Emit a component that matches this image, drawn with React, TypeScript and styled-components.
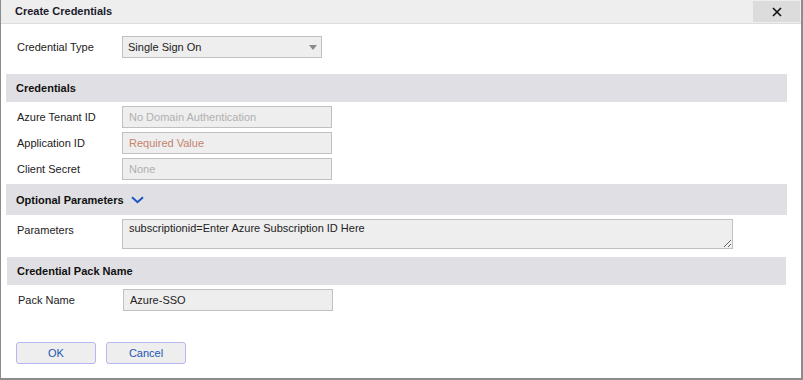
import React from "react";
import styled, { createGlobalStyle } from "styled-components";

const GlobalStyle = createGlobalStyle`
  html, body {
    margin: 0;
    padding: 0;
    background: #ffffff;
  }
  body {
    font-family: "Liberation Sans", Arial, sans-serif;
    font-size: 11px;
    color: #222222;
  }
`;

const Dialog = styled.div`
  width: 803px;
  height: 380px;
  box-sizing: border-box;
  border-left: 1px solid #8c8c8c;
  border-right: 2px solid #8c8c8c;
  border-bottom: 2px solid #8c8c8c;
  display: flex;
  flex-direction: column;
  background: #ffffff;
`;

const TitleBar = styled.div`
  height: 23px;
  border-bottom: 1px solid #dddddd;
  background: #eeeeee;
  display: flex;
  align-items: flex-start;
  justify-content: space-between;
  padding-left: 14px;
`;

const Title = styled.h1`
  margin: 0;
  font-size: 11px;
  font-weight: bold;
  line-height: 23px;
  color: #1b1b2b;
`;

const CloseButton = styled.button`
  width: 47px;
  height: 21px;
  margin: 1px 1px 0 0;
  border: none;
  padding: 0;
  background: #dcdcdc;
  display: flex;
  align-items: center;
  justify-content: center;
  cursor: pointer;
`;

const Body = styled.div`
  padding: 12px 14px 0 5px;
  display: flex;
  flex-direction: column;
`;

const Row = styled.div<{ $top?: number; $shift?: number }>`
  display: grid;
  grid-template-columns: 116px auto;
  align-items: start;
  margin-top: ${(p) => p.$top ?? 4}px;
  padding-left: ${(p) => p.$shift ?? 0}px;
`;

const Label = styled.label<{ $padTop?: number }>`
  padding-left: 11px;
  line-height: 22px;
  padding-top: ${(p) => p.$padTop ?? 0}px;
  color: #222222;
`;

const SectionHeader = styled.div<{ $top: number; $height: number; $shift?: number }>`
  margin-top: ${(p) => p.$top}px;
  margin-left: ${(p) => p.$shift ?? 0}px;
  margin-right: ${(p) => p.$shift ?? 0}px;
  height: ${(p) => p.$height}px;
  background: #e0e0e4;
  padding-left: 10px;
  display: flex;
  align-items: center;
  gap: 7px;
  font-weight: bold;
  color: #111111;
`;

const Field = styled.input<{ $tone?: "muted" | "warn" | "normal" }>`
  box-sizing: border-box;
  width: 210px;
  height: 22px;
  margin: 0;
  padding: 0 6px;
  border: 1px solid #c0c0c0;
  background: #eeeeee;
  font-family: "Liberation Sans", Arial, sans-serif;
  font-size: 11px;
  color: ${(p) =>
    p.$tone === "warn" ? "#c4826f" : p.$tone === "muted" ? "#b0b0b0" : "#222222"};
  outline: none;
`;

const SelectWrap = styled.div`
  position: relative;
  width: 200px;
  height: 22px;
  &::after {
    content: "";
    position: absolute;
    right: 5px;
    top: 9px;
    border-left: 4.5px solid transparent;
    border-right: 4.5px solid transparent;
    border-top: 5px solid #8a8a8a;
    pointer-events: none;
  }
`;

const Select = styled.select`
  appearance: none;
  box-sizing: border-box;
  width: 100%;
  height: 22px;
  margin: 0;
  padding: 0 5px;
  border: 1px solid #c0c0c0;
  border-radius: 0;
  background: #eeeeee;
  font-family: "Liberation Sans", Arial, sans-serif;
  font-size: 11px;
  color: #222222;
  outline: none;
`;

const TextArea = styled.textarea`
  box-sizing: border-box;
  width: 611px;
  height: 30px;
  margin: 0;
  padding: 2px 6px;
  border: 1px solid #c0c0c0;
  background: #eeeeee;
  font-family: "Liberation Sans", Arial, sans-serif;
  font-size: 11px;
  line-height: 13px;
  color: #222222;
  outline: none;
  display: block;
`;

const Actions = styled.div`
  margin-top: 31px;
  padding-left: 10px;
  display: flex;
  gap: 10px;
`;

const ActionButton = styled.button`
  box-sizing: border-box;
  width: 80px;
  height: 22px;
  margin: 0;
  padding: 0;
  border: 1px solid #b6b6f2;
  border-radius: 3px;
  background: #eeeeee;
  font-family: "Liberation Sans", Arial, sans-serif;
  font-size: 11px;
  color: #2356b4;
  cursor: pointer;
`;

const Chevron = () => (
  <svg width="13" height="8" viewBox="0 0 13 8">
    <path d="M1 1.2 L6.5 6.2 L12 1.2" fill="none" stroke="#1f53c4" strokeWidth="2" />
  </svg>
);

const CloseIcon = () => (
  <svg width="10" height="10" viewBox="0 0 10 10">
    <path d="M1 1 L9 9 M9 1 L1 9" stroke="#111111" strokeWidth="1.6" />
  </svg>
);

export default function App() {
  return (
    <>
      <GlobalStyle />
      <Dialog>
        <TitleBar>
          <Title>Create Credentials</Title>
          <CloseButton aria-label="Close">
            <CloseIcon />
          </CloseButton>
        </TitleBar>
        <Body>
          <Row $top={0}>
            <Label>Credential Type</Label>
            <SelectWrap>
              <Select defaultValue="sso">
                <option value="sso">Single Sign On</option>
              </Select>
            </SelectWrap>
          </Row>

          <SectionHeader $top={16} $height={28}>
            Credentials
          </SectionHeader>
          <Row>
            <Label>Azure Tenant ID</Label>
            <Field $tone="muted" readOnly value="No Domain Authentication" />
          </Row>
          <Row>
            <Label>Application ID</Label>
            <Field $tone="warn" readOnly value="Required Value" />
          </Row>
          <Row>
            <Label>Client Secret</Label>
            <Field $tone="muted" readOnly value="None" />
          </Row>

          <SectionHeader $top={4} $height={31}>
            Optional Parameters
            <Chevron />
          </SectionHeader>
          <Row>
            <Label $padTop={0}>Parameters</Label>
            <TextArea defaultValue="subscriptionid=Enter Azure Subscription ID Here" />
          </Row>

          <SectionHeader $top={8} $height={28} $shift={1}>
            Credential Pack Name
          </SectionHeader>
          <Row $shift={1}>
            <Label>Pack Name</Label>
            <Field $tone="normal" defaultValue="Azure-SSO" />
          </Row>

          <Actions>
            <ActionButton>OK</ActionButton>
            <ActionButton>Cancel</ActionButton>
          </Actions>
        </Body>
      </Dialog>
    </>
  );
}
